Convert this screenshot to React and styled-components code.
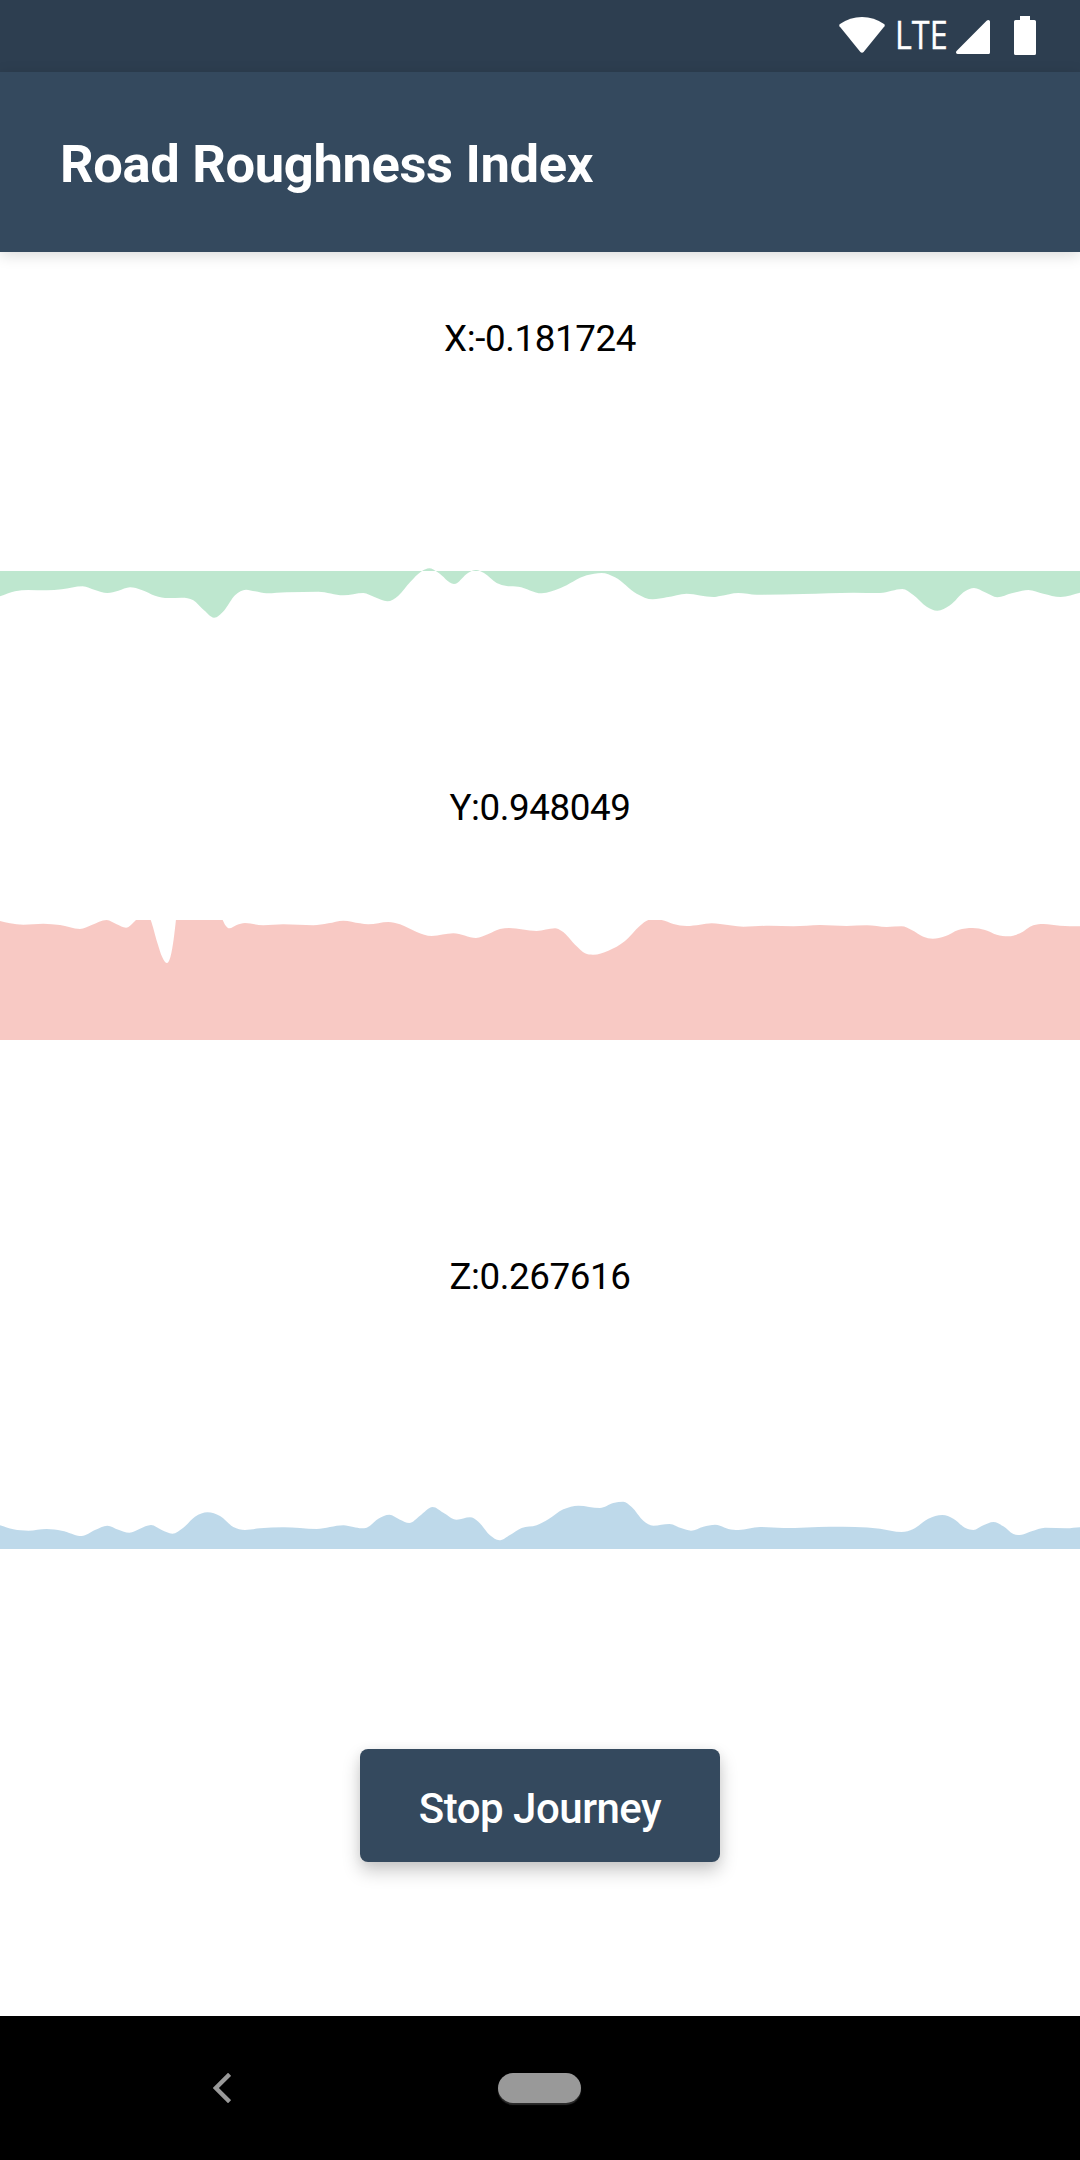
import React from "react";
import styled, { createGlobalStyle } from "styled-components";

const GlobalStyle = createGlobalStyle`
  body {
    margin: 0;
    background: #ffffff;
    font-family: Roboto, "Liberation Sans", sans-serif;
  }
`;

const Screen = styled.div`
  display: flex;
  flex-direction: column;
  width: 1080px;
  height: 2160px;
  overflow: hidden;
  background: #ffffff;
`;

const StatusBar = styled.div`
  display: flex;
  flex: none;
  align-items: flex-start;
  justify-content: flex-end;
  box-sizing: border-box;
  height: 72px;
  padding-right: 44px;
  background: #2d3e50;
`;

const StatusIcon = styled.svg`
  display: block;
  flex: none;
  margin-left: ${(p) => p.$gap}px;
  margin-top: ${(p) => p.$top}px;
  fill: #ffffff;
`;

const NetworkType = styled.span`
  width: 53px;
  margin-left: 10px;
  margin-top: 13px;
  color: #ffffff;
  font-family: "Open Sans", "Noto Sans", sans-serif;
  font-size: 38px;
  font-weight: 400;
  line-height: 43px;
  white-space: nowrap;
  -webkit-text-stroke: 0.4px #ffffff;
  transform: scaleX(0.85);
  transform-origin: left center;
`;

const AppBar = styled.header`
  display: flex;
  flex: none;
  align-items: center;
  box-sizing: border-box;
  height: 180px;
  padding: 4px 60px 0;
  background: #34495e;
  box-shadow: 0 3px 14px rgba(0, 0, 0, 0.15);
`;

const Title = styled.h1`
  margin: 0;
  color: #ffffff;
  font-size: 52.5px;
  font-weight: 700;
  line-height: 62px;
  letter-spacing: -0.36px;
`;

const Content = styled.main`
  display: flex;
  flex: 1;
  flex-direction: column;
  align-items: center;
`;

const AxisSection = styled.section`
  display: flex;
  flex: none;
  flex-direction: column;
  align-items: center;
  width: 100%;
  height: 469px;
`;

const Reading = styled.p`
  margin: 65px 0 0;
  height: 134px;
  color: #000000;
  font-size: 36.75px;
  line-height: 43px;
  letter-spacing: -0.4px;
`;

const AreaSvg = styled.svg`
  display: block;
  width: 1080px;
  height: 270px;
`;

const JourneyButton = styled.button`
  width: 360px;
  height: 113px;
  margin-top: 90px;
  padding: 7px 0 0;
  border: 0;
  border-radius: 8px;
  background: #34495e;
  box-shadow: 0 9px 18px rgba(0, 0, 0, 0.21), 0 1px 12px rgba(0, 0, 0, 0.05);
  color: #ffffff;
  font-family: inherit;
  font-size: 42px;
  font-weight: 500;
  line-height: 50px;
  letter-spacing: -0.5px;
`;

const NavigationBar = styled.nav`
  display: flex;
  flex: none;
  align-items: flex-start;
  box-sizing: border-box;
  height: 144px;
  padding: 57px 0 0 213px;
  background: #000000;
`;

const BackIcon = styled.svg`
  display: block;
  fill: none;
  stroke: #999999;
  stroke-width: 4.4;
`;

const HomePill = styled.div`
  width: 83px;
  height: 30px;
  margin-left: 267px;
  border-radius: 15px;
  background: #999999;
  box-shadow: 0 2px 1px #2b2b2b;
`;

// Samples are in thirds of a pixel; `top` and `baseline` share their scale.
const axes = [
  {
    name: "X",
    value: "-0.181724",
    color: "#27ae60",
    top: -297,
    baseline: 63,
    points: [
      [0, 139], [45, 124], [85, 120], [140, 121], [185, 118], [248, 109], [285, 120], [322, 129],
      [355, 122], [390, 112], [425, 120], [465, 137], [505, 144], [545, 143], [580, 151], [612, 181],
      [642, 203], [672, 182], [705, 136], [738, 119], [765, 124], [800, 130], [860, 127], [955, 125],
      [1030, 136], [1090, 129], [1125, 142], [1162, 154], [1195, 137], [1230, 97], [1265, 64],
      [1288, 55], [1312, 66], [1362, 102], [1405, 68], [1428, 60], [1452, 69], [1490, 99], [1520, 108],
      [1555, 110], [1625, 130], [1680, 115], [1760, 76], [1805, 69], [1845, 82], [1910, 131],
      [1958, 148], [2000, 142], [2060, 131], [2140, 141], [2160, 138], [2215, 129], [2270, 134],
      [2410, 132], [2560, 128], [2640, 129], [2675, 122], [2707, 117], [2740, 135], [2780, 170],
      [2812, 182], [2850, 166], [2895, 124], [2922, 114], [2955, 127], [2992, 142], [3035, 130],
      [3085, 120], [3130, 131], [3182, 141], [3240, 128],
    ],
  },
  {
    name: "Y",
    value: "0.948049",
    color: "#e74c3c",
    top: 60,
    baseline: 420,
    points: [
      [0, 63], [30, 70], [70, 74], [130, 71], [180, 75], [240, 87], [275, 75], [320, 60], [350, 73],
      [378, 83], [408, 60], [435, 30], [452, 60], [472, 128], [487, 172], [500, 189], [512, 168],
      [521, 118], [528, 58], [540, -60], [590, -150], [650, 0], [668, 60], [688, 85], [710, 75],
      [735, 69], [790, 76], [850, 73], [940, 76], [985, 70], [1030, 62], [1080, 70], [1105, 73],
      [1165, 66], [1200, 73], [1250, 96], [1295, 108], [1360, 100], [1428, 114], [1465, 102],
      [1500, 87], [1527, 84], [1610, 93], [1665, 85], [1685, 93], [1730, 139], [1755, 160], [1780, 164],
      [1825, 152], [1875, 123], [1920, 77], [1945, 60], [1965, 59], [1985, 60], [2020, 72], [2060, 78],
      [2100, 74], [2135, 70], [2160, 72], [2230, 80], [2310, 77], [2380, 79], [2460, 75], [2540, 78],
      [2600, 76], [2660, 81], [2705, 79], [2735, 90], [2770, 110], [2798, 116], [2835, 109], [2875, 90],
      [2918, 84], [2955, 90], [2990, 104], [3025, 109], [3060, 100], [3100, 76], [3130, 72], [3180, 77],
      [3240, 79],
    ],
  },
  {
    name: "Z",
    value: "0.267616",
    color: "#2980b9",
    top: -273,
    baseline: 207,
    points: [
      [0, 136], [40, 148], [85, 152], [140, 147], [185, 152], [245, 168], [285, 150], [322, 137],
      [355, 149], [388, 158], [420, 146], [453, 135], [485, 150], [517, 161], [550, 143], [585, 110],
      [623, 97], [660, 108], [700, 141], [735, 150], [780, 145], [850, 142], [950, 147], [1030, 136],
      [1060, 141], [1085, 145], [1100, 143], [1135, 116], [1168, 104], [1200, 119], [1228, 129],
      [1260, 107], [1298, 81], [1330, 98], [1370, 119], [1410, 112], [1435, 125], [1470, 166],
      [1498, 181], [1530, 165], [1565, 144], [1610, 136], [1645, 118], [1690, 88], [1735, 77],
      [1800, 84], [1840, 69], [1870, 65], [1895, 81], [1930, 122], [1960, 137], [2008, 132],
      [2045, 145], [2073, 152], [2110, 140], [2145, 134], [2160, 137], [2185, 147], [2215, 150],
      [2280, 141], [2350, 144], [2490, 140], [2640, 146], [2705, 156], [2740, 147], [2785, 116],
      [2827, 105], [2860, 116], [2898, 145], [2920, 150], [2950, 136], [2980, 126], [3010, 139],
      [3040, 162], [3060, 165], [3095, 154], [3135, 143], [3200, 145], [3240, 142],
    ],
  },
];

// Smooth area outline: tangents go flat at every peak and valley, and
// elsewhere follow the parabola through the neighbouring samples.
function areaPath(points, baseline) {
  const slopes = points.map(([x, y], i) => {
    const prev = points[i - 1];
    const next = points[i + 1];
    if (!prev) return (next[1] - y) / (next[0] - x);
    if (!next) return (y - prev[1]) / (x - prev[0]);
    const before = x - prev[0];
    const after = next[0] - x;
    const slopeIn = (y - prev[1]) / before;
    const slopeOut = (next[1] - y) / after;
    if (slopeIn * slopeOut <= 0) return 0;
    return (after * slopeIn + before * slopeOut) / (before + after);
  });
  let d = `M${points[0][0]} ${baseline}L${points[0][0]} ${points[0][1]}`;
  for (let i = 1; i < points.length; i += 1) {
    const [x0, y0] = points[i - 1];
    const [x1, y1] = points[i];
    const h = (x1 - x0) / 3;
    d += `C${x0 + h} ${y0 + slopes[i - 1] * h} ${x1 - h} ${y1 - slopes[i] * h} ${x1} ${y1}`;
  }
  return `${d}L${points[points.length - 1][0]} ${baseline}Z`;
}

function AreaChart({ axis }) {
  return (
    <AreaSvg viewBox={`0 ${axis.top} 3240 810`}>
      <path d={areaPath(axis.points, axis.baseline)} fill={axis.color} fillOpacity="0.3" />
    </AreaSvg>
  );
}

export default function App() {
  return (
    <>
      <GlobalStyle />
      <Screen>
        <StatusBar>
          <StatusIcon $gap={0} $top={17} width="46" height="36" viewBox="0 0 46 36">
            <path d="M0.5 9.2Q-0.2 8 1 7.1Q11 0 23 0Q35 0 45 7.1Q46.2 8 45.5 9.2L24.6 35Q23 36.6 21.4 35Z" />
          </StatusIcon>
          <NetworkType>LTE</NetworkType>
          <StatusIcon $gap={8} $top={20} width="34" height="34" viewBox="0 0 34 34">
            <path d="M30.6 0.8Q31.4 0 32.4 0Q34 0 34 1.6V32.4Q34 34 32.4 34H1.6Q0 34 0 32.6Q0 31.6 0.8 30.8Z" />
          </StatusIcon>
          <StatusIcon $gap={24} $top={16} width="22" height="39" viewBox="0 0 22 39">
            <path d="M6 0H16V4H20.4Q22 4 22 5.6V37.4Q22 39 20.4 39H1.6Q0 39 0 37.4V5.6Q0 4 1.6 4H6Z" />
          </StatusIcon>
        </StatusBar>
        <AppBar>
          <Title>Road Roughness Index</Title>
        </AppBar>
        <Content>
          {axes.map((axis) => (
            <AxisSection key={axis.name}>
              <Reading>{`${axis.name}:${axis.value}`}</Reading>
              <AreaChart axis={axis} />
            </AxisSection>
          ))}
          <JourneyButton type="button">Stop Journey</JourneyButton>
        </Content>
        <NavigationBar>
          <BackIcon width="18" height="30" viewBox="0 0 18 30">
            <path d="M16.6 1.3L2.8 15L16.6 28.7" />
          </BackIcon>
          <HomePill />
        </NavigationBar>
      </Screen>
    </>
  );
}
